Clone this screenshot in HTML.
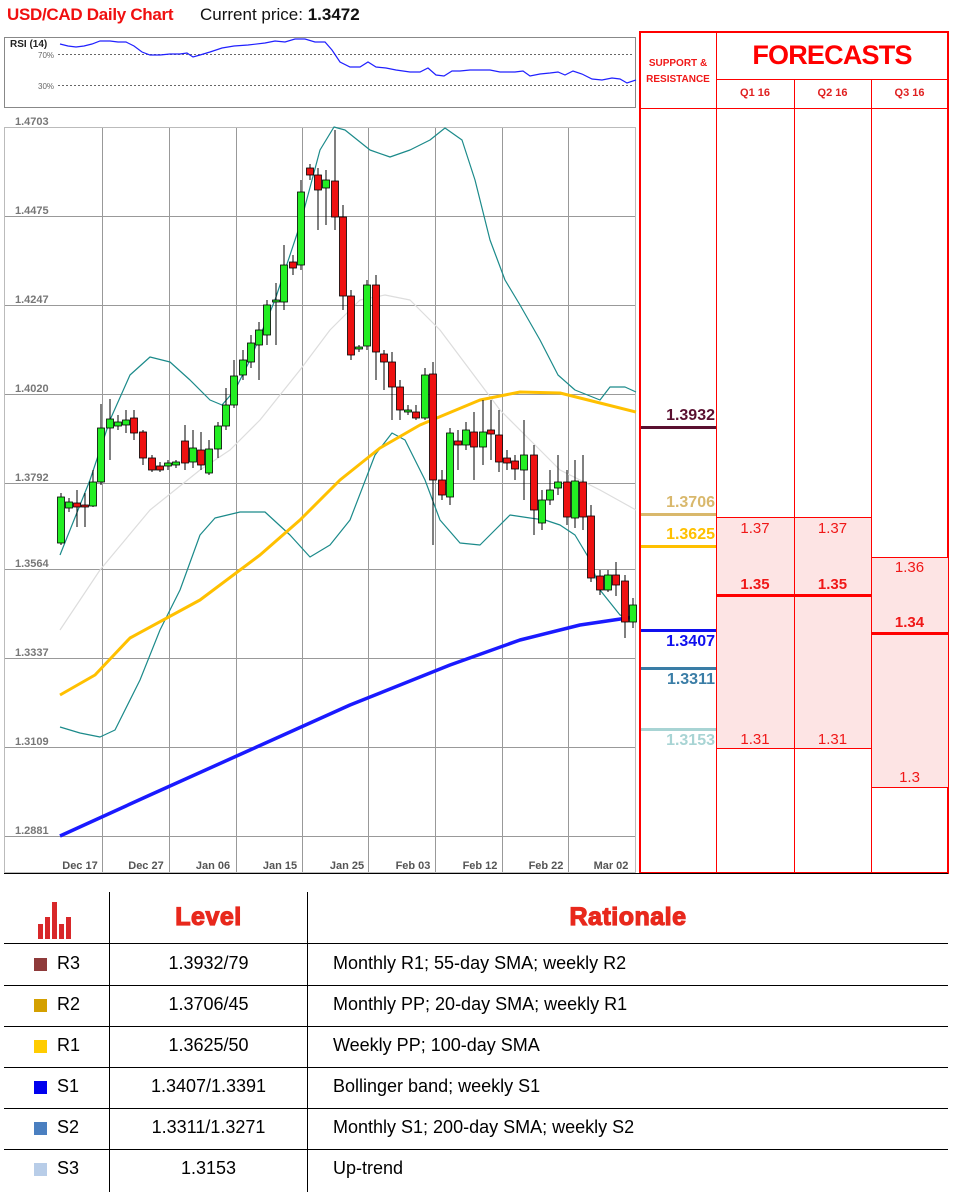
<!DOCTYPE html>
<html><head><meta charset="utf-8"><style>
*{margin:0;padding:0;box-sizing:border-box}
body{width:959px;height:1192px;background:#fff;position:relative;overflow:hidden;font-family:"Liberation Sans",sans-serif}
.a{position:absolute}
.t{font-size:18px;color:#000;position:absolute;white-space:nowrap}
</style></head><body>
<div class="a" style="left:7px;top:5px;font-size:17px;font-weight:bold;color:#f01010;letter-spacing:-0.3px">USD/CAD Daily Chart</div>
<div class="a" style="left:200px;top:5px;font-size:17px;color:#111">Current price: <b>1.3472</b></div>

<svg class="a" style="left:0;top:0" width="959" height="880" id="sv">
<rect x="4.5" y="37.5" width="631" height="70" fill="none" stroke="#888"/>
<text x="10" y="47" font-size="10" font-weight="bold" font-family="Liberation Sans" fill="#222">RSI (14)</text>
<text x="38" y="58" font-size="8" font-family="Liberation Sans" fill="#666">70%</text>
<text x="38" y="89" font-size="8" font-family="Liberation Sans" fill="#666">30%</text>
<line x1="58" y1="54.5" x2="634" y2="54.5" stroke="#666" stroke-dasharray="2,2"/>
<line x1="58" y1="85.5" x2="634" y2="85.5" stroke="#666" stroke-dasharray="2,2"/>
<polyline fill="none" stroke="#2020ff" stroke-width="1.2" points="60,44 68,46 76,47 84,46 92,44 100,41 110,41 118,42 126,42 134,46 142,52 150,55 160,55 170,54 180,54 187,53 193,57 200,55 210,52 222,48 234,46 248,45 265,43 275,41 285,42 295,39 305,39 315,42 325,42 332,50 340,62 350,67 360,67 368,62 376,67 386,68 396,70 410,72 420,72 428,68 436,75 444,76 452,71 460,71 470,70 480,70 490,70 500,72 515,72 523,71 530,76 540,74 550,73 558,72 565,75 573,71 582,74 592,79 602,80 612,78 620,79 627,83 636,80"/>
<rect x="4.5" y="127.5" width="631" height="745" fill="none" stroke="#bbb"/>
<g id="grid" stroke="#999" stroke-width="1"></g>
<g id="lines"></g>
<g id="cnd"></g>
</svg>

<!-- forecast panel -->
<div class="a" style="left:639px;top:31px;width:310px;height:843px;border:2px solid #f00"></div>
<div class="a" style="left:716px;top:31px;width:1px;height:842px;background:#f00"></div>
<div class="a" style="left:794px;top:80px;width:1px;height:793px;background:#f00"></div>
<div class="a" style="left:871px;top:80px;width:1px;height:793px;background:#f00"></div>
<div class="a" style="left:716px;top:79px;width:232px;height:1px;background:#f00"></div>
<div class="a" style="left:639px;top:108px;width:309px;height:1px;background:#f00"></div>
<div class="a" style="left:640px;top:56px;width:76px;text-align:center;font-size:10px;font-weight:bold;color:#f01818;line-height:16px">SUPPORT &amp;<br>RESISTANCE</div>
<div class="a" style="left:716px;top:40px;width:232px;text-align:center;font-size:27px;font-weight:bold;color:#f00;letter-spacing:-0.8px">FORECASTS</div>
<div class="a" style="left:716px;top:87px;width:78px;text-align:center;font-size:11px;font-weight:bold;color:#e02020">Q1 16</div>
<div class="a" style="left:794px;top:87px;width:77px;text-align:center;font-size:11px;font-weight:bold;color:#e02020">Q2 16</div>
<div class="a" style="left:871px;top:87px;width:77px;text-align:center;font-size:11px;font-weight:bold;color:#e02020">Q3 16</div>

<div class="a" style="left:717px;top:517px;width:154px;height:232px;background:#fde4e4;border-top:1px solid #f00;border-bottom:1px solid #f00"></div>
<div class="a" style="left:794px;top:517px;width:1px;height:232px;background:#f00"></div>
<div class="a" style="left:872px;top:557px;width:76px;height:231px;background:#fde4e4;border-top:1px solid #f00;border-bottom:1px solid #f00"></div>
<div class="a" style="left:717px;top:594px;width:154px;height:3px;background:#f00"></div>
<div class="a" style="left:872px;top:632px;width:76px;height:3px;background:#f00"></div>
<div class="a" style="left:716px;top:520px;width:78px;text-align:center;font-size:15px;color:#f01818">1.37</div>
<div class="a" style="left:794px;top:520px;width:77px;text-align:center;font-size:15px;color:#f01818">1.37</div>
<div class="a" style="left:716px;top:576px;width:78px;text-align:center;font-size:15px;font-weight:bold;color:#f01818">1.35</div>
<div class="a" style="left:794px;top:576px;width:77px;text-align:center;font-size:15px;font-weight:bold;color:#f01818">1.35</div>
<div class="a" style="left:716px;top:731px;width:78px;text-align:center;font-size:15px;color:#f01818">1.31</div>
<div class="a" style="left:794px;top:731px;width:77px;text-align:center;font-size:15px;color:#f01818">1.31</div>
<div class="a" style="left:871px;top:559px;width:77px;text-align:center;font-size:15px;color:#f01818">1.36</div>
<div class="a" style="left:871px;top:614px;width:77px;text-align:center;font-size:15px;font-weight:bold;color:#f01818">1.34</div>
<div class="a" style="left:871px;top:769px;width:77px;text-align:center;font-size:15px;color:#f01818">1.3</div>

<div class="a" style="left:641px;top:426px;width:75px;height:3px;background:#5a1030"></div>
<div class="a" style="left:641px;top:407px;width:74px;text-align:right;font-size:16px;font-weight:bold;color:#5a1030">1.3932</div>
<div class="a" style="left:641px;top:513px;width:75px;height:3px;background:#d9b86c"></div>
<div class="a" style="left:641px;top:494px;width:74px;text-align:right;font-size:16px;font-weight:bold;color:#d9b86c">1.3706</div>
<div class="a" style="left:641px;top:545px;width:75px;height:3px;background:#ffc000"></div>
<div class="a" style="left:641px;top:526px;width:74px;text-align:right;font-size:16px;font-weight:bold;color:#ffc000">1.3625</div>
<div class="a" style="left:641px;top:629px;width:75px;height:3px;background:#1010ee"></div>
<div class="a" style="left:641px;top:633px;width:74px;text-align:right;font-size:16px;font-weight:bold;color:#1010ee">1.3407</div>
<div class="a" style="left:641px;top:667px;width:75px;height:3px;background:#3a7da6"></div>
<div class="a" style="left:641px;top:671px;width:74px;text-align:right;font-size:16px;font-weight:bold;color:#3a7da6">1.3311</div>
<div class="a" style="left:641px;top:728px;width:75px;height:3px;background:#a8d4d4"></div>
<div class="a" style="left:641px;top:732px;width:74px;text-align:right;font-size:16px;font-weight:bold;color:#a8d4d4">1.3153</div>

<!-- bottom table -->
<div class="a" style="left:4px;top:873px;width:944px;height:1px;background:#000"></div>
<div class="a" style="left:109px;top:892px;width:1px;height:300px;background:#000"></div>
<div class="a" style="left:307px;top:892px;width:1px;height:300px;background:#000"></div>
<div id="hl"></div>
<div class="a" style="left:38px;top:902px;width:36px;height:37px">
<div class="a" style="left:0;top:22px;width:5px;height:15px;background:#d8282a"></div>
<div class="a" style="left:7px;top:15px;width:5px;height:22px;background:#d8282a"></div>
<div class="a" style="left:14px;top:0;width:5px;height:37px;background:#d8282a"></div>
<div class="a" style="left:21px;top:22px;width:5px;height:15px;background:#d8282a"></div>
<div class="a" style="left:28px;top:15px;width:5px;height:22px;background:#d8282a"></div>
</div>
<div class="a" style="left:110px;top:903px;width:197px;text-align:center;font-size:25px;font-weight:bold;color:#e8281c;letter-spacing:0.5px;-webkit-text-stroke:1.2px #e8281c">Level</div>
<div class="a" style="left:308px;top:903px;width:640px;text-align:center;font-size:25px;font-weight:bold;color:#e8281c;letter-spacing:0.5px;-webkit-text-stroke:1.2px #e8281c">Rationale</div>
<div id="rows"></div>

<script>
var NS="http://www.w3.org/2000/svg";
function el(p,t,a){var e=document.createElementNS(NS,t);for(var k in a)e.setAttribute(k,a[k]);p.appendChild(e);return e;}
var sv=document.getElementById('sv'),g=document.getElementById('grid');
var ys=[127,216,305,394,483,569,658,747,836],lb=["1.4703","1.4475","1.4247","1.4020","1.3792","1.3564","1.3337","1.3109","1.2881"];
ys.forEach(function(y,i){if(i>0)el(g,'line',{x1:5,y1:y+.5,x2:635,y2:y+.5,stroke:'#999'});var t=el(sv,'text',{x:15,y:y-2,'font-size':11,'font-weight':'bold','font-family':'Liberation Sans',fill:'#777'});t.textContent=lb[i];});
[102,169,236,302,368,435,502,568].forEach(function(x){el(g,'line',{x1:x+.5,y1:128,x2:x+.5,y2:872,stroke:'#999'});});
[[80,"Dec 17"],[146,"Dec 27"],[213,"Jan 06"],[280,"Jan 15"],[347,"Jan 25"],[413,"Feb 03"],[480,"Feb 12"],[546,"Feb 22"],[611,"Mar 02"]].forEach(function(a){var t=el(sv,'text',{x:a[0],y:869,'font-size':11,'font-weight':'bold','font-family':'Liberation Sans',fill:'#555','text-anchor':'middle'});t.textContent=a[1];});
var L=document.getElementById('lines');
function pl(p,c,w){el(L,'polyline',{points:p,fill:'none',stroke:c,'stroke-width':w,'stroke-linejoin':'round'});}
pl("60,630 100,570 150,510 200,470 230,450 260,420 300,370 330,330 360,300 385,295 410,300 440,330 470,370 500,410 530,440 560,470 600,490 636,510","#ddd",1.2);
pl("60,555 90,480 110,420 130,375 150,357 170,362 190,380 210,400 222,405 235,390 250,360 275,300 300,225 320,150 334,127 345,130 370,150 390,157 410,150 430,140 445,128 462,140 475,180 490,240 505,280 520,305 540,340 558,375 575,390 600,400 610,387 625,387 636,392","#1b8a8a",1.2);
pl("60,727 80,733 100,737 115,730 140,680 160,630 180,590 200,535 215,518 240,512 265,512 290,535 310,557 330,545 350,520 375,455 392,433 405,440 425,480 440,520 460,543 480,545 495,530 510,515 530,518 545,520 560,525 575,535 590,560 600,590 620,615 636,620","#1b8a8a",1.2);
pl("60,695 95,675 130,638 200,600 260,555 300,520 340,480 380,448 420,425 480,400 520,392 560,393 600,403 636,412","#ffc000",3);
pl("60,836 150,795 250,750 350,705 450,665 520,640 580,625 634,617","#1a1aff",3.5);
var C=[[61,497,543,493,545,1],[69,502,508,498,512,1],[77,503,507,490,527,0],[85,505,507,493,527,0],[93,482,506,470,507,1],[101,428,482,404,485,1],[110,419,428,399,460,1],[118,422,426,415,430,1],[126,420,425,410,433,1],[134,418,433,410,440,0],[143,432,458,430,465,0],[152,458,470,455,472,0],[160,466,470,462,472,0],[168,463,466,460,470,1],[176,462,465,460,468,1],[185,441,463,425,470,0],[193,448,462,430,468,1],[201,450,465,432,470,0],[209,449,473,440,475,1],[218,426,449,422,458,1],[226,405,426,388,430,1],[234,376,405,360,408,1],[243,360,375,350,380,1],[251,343,362,335,368,1],[259,330,345,322,380,1],[267,305,335,300,345,1],[276,300,302,283,345,1],[284,265,302,245,310,1],[293,262,268,255,275,0],[301,192,265,180,270,1],[310,168,175,164,180,0],[318,175,190,168,230,0],[326,180,188,170,225,1],[335,181,217,130,230,0],[343,217,296,205,310,0],[351,296,355,290,360,0],[359,347,349,345,352,1],[367,285,346,280,350,1],[376,285,352,275,380,0],[384,354,362,350,390,0],[392,362,387,352,420,0],[400,387,410,380,420,0],[408,410,412,405,415,1],[416,412,418,405,420,0],[425,375,418,368,420,1],[433,374,480,362,545,0],[442,480,495,470,500,0],[450,433,497,428,505,1],[458,441,445,430,470,0],[466,430,445,422,450,1],[474,432,447,412,480,0],[483,432,447,400,465,1],[491,430,434,400,460,0],[499,435,462,410,472,0],[507,458,463,450,470,0],[515,461,469,455,480,0],[524,455,470,420,500,1],[534,455,510,445,535,0],[542,500,523,490,530,1],[550,490,500,470,505,1],[558,482,488,455,495,1],[567,482,517,470,525,0],[575,481,518,460,528,1],[583,482,517,455,530,0],[591,516,578,505,582,0],[600,576,590,570,595,0],[608,575,590,570,592,1],[616,575,585,562,596,0],[625,581,622,575,638,0],[633,605,622,598,628,1]];
var cg=document.getElementById('cnd');
C.forEach(function(c){el(cg,'line',{x1:c[0],y1:c[3],x2:c[0],y2:c[4],stroke:'#000','stroke-width':1});el(cg,'rect',{x:c[0]-3.5,y:c[1],width:7,height:Math.max(2,c[2]-c[1]),fill:c[5]?'#22ee22':'#ee1111',stroke:'#000','stroke-width':0.8});});
var hl=document.getElementById('hl');
[943,985,1026,1067,1108,1149].forEach(function(y){var d=document.createElement('div');d.className='a';d.style.cssText='left:4px;top:'+y+'px;width:944px;height:1px;background:#000';hl.appendChild(d);});
var R=[["#8e3a3a","R3","1.3932/79","Monthly R1; 55-day SMA; weekly R2"],["#d4a000","R2","1.3706/45","Monthly PP; 20-day SMA; weekly R1"],["#ffcc00","R1","1.3625/50","Weekly PP; 100-day SMA"],["#0000ee","S1","1.3407/1.3391","Bollinger band; weekly S1"],["#4a7fc0","S2","1.3311/1.3271","Monthly S1; 200-day SMA; weekly S2"],["#b8cde8","S3","1.3153","Up-trend"]];
var rw=document.getElementById('rows');
R.forEach(function(r,i){var y=943+i*41;rw.insertAdjacentHTML('beforeend','<div class="a" style="left:34px;top:'+(y+15)+'px;width:13px;height:13px;background:'+r[0]+'"></div><div class="t" style="left:57px;top:'+(y+10)+'px">'+r[1]+'</div><div class="t" style="left:110px;width:197px;text-align:center;top:'+(y+10)+'px">'+r[2]+'</div><div class="t" style="left:333px;top:'+(y+10)+'px">'+r[3]+'</div>');});
</script>
</body></html>
